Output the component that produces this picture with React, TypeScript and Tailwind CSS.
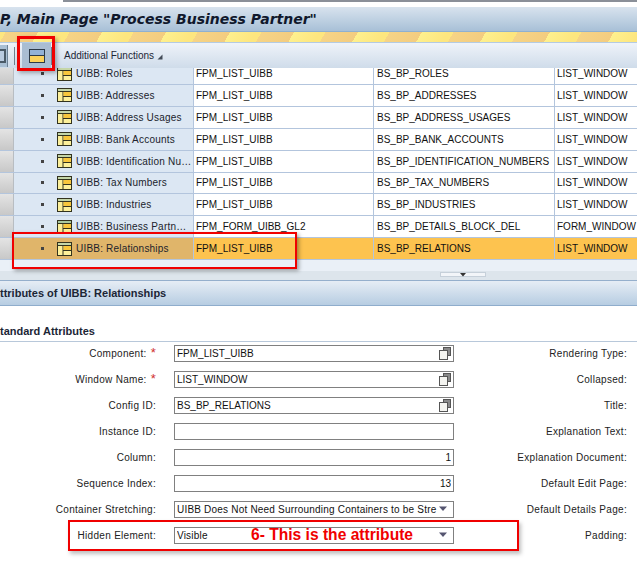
import React from 'react';

const rows = [
  { name: 'UIBB: Roles', comp: 'FPM_LIST_UIBB', config: 'BS_BP_ROLES', win: 'LIST_WINDOW' },
  { name: 'UIBB: Addresses', comp: 'FPM_LIST_UIBB', config: 'BS_BP_ADDRESSES', win: 'LIST_WINDOW' },
  { name: 'UIBB: Address Usages', comp: 'FPM_LIST_UIBB', config: 'BS_BP_ADDRESS_USAGES', win: 'LIST_WINDOW' },
  { name: 'UIBB: Bank Accounts', comp: 'FPM_LIST_UIBB', config: 'BS_BP_BANK_ACCOUNTS', win: 'LIST_WINDOW' },
  { name: 'UIBB: Identification Nu…', comp: 'FPM_LIST_UIBB', config: 'BS_BP_IDENTIFICATION_NUMBERS', win: 'LIST_WINDOW' },
  { name: 'UIBB: Tax Numbers', comp: 'FPM_LIST_UIBB', config: 'BS_BP_TAX_NUMBERS', win: 'LIST_WINDOW' },
  { name: 'UIBB: Industries', comp: 'FPM_LIST_UIBB', config: 'BS_BP_INDUSTRIES', win: 'LIST_WINDOW' },
  { name: 'UIBB: Business Partn…', comp: 'FPM_FORM_UIBB_GL2', config: 'BS_BP_DETAILS_BLOCK_DEL', win: 'FORM_WINDOW', form: true },
  { name: 'UIBB: Relationships', comp: 'FPM_LIST_UIBB', config: 'BS_BP_RELATIONS', win: 'LIST_WINDOW', selected: true },
];

const fields = [
  { label: 'Component:', required: true, value: 'FPM_LIST_UIBB', icon: 'copy', right: 'Rendering Type:' },
  { label: 'Window Name:', required: true, value: 'LIST_WINDOW', icon: 'copy', right: 'Collapsed:' },
  { label: 'Config ID:', value: 'BS_BP_RELATIONS', icon: 'copy', right: 'Title:' },
  { label: 'Instance ID:', value: '', right: 'Explanation Text:' },
  { label: 'Column:', value: '1', alignRight: true, right: 'Explanation Document:' },
  { label: 'Sequence Index:', value: '13', alignRight: true, right: 'Default Edit Page:' },
  { label: 'Container Stretching:', value: 'UIBB Does Not Need Surrounding Containers to be Stre', icon: 'select', right: 'Default Details Page:' },
  { label: 'Hidden Element:', value: 'Visible', icon: 'select', right: 'Padding:' },
];

const UibbIcon = ({ form }: { form?: boolean }) => (
  <svg width="15" height="14" viewBox="0 0 15 14" className="shrink-0">
    <rect x="0.5" y="0.5" width="14" height="13" fill="#fdf09a" stroke="#33331f" />
    <rect x="1" y="1" width="13" height="2.5" fill={form ? '#a9c9a0' : '#c5d6a8'} />
    <path d="M1 3.5H14M6 3.5V13.5M6 8.5H14" stroke="#33331f" fill="none" />
    <rect x="6.5" y="4" width="7.5" height="4" fill="#f8c63c" />
  </svg>
);

const CopyIcon = () => (
  <svg width="12" height="13" viewBox="0 0 12 13" className="shrink-0">
    <rect x="4.5" y="0.5" width="7" height="8" fill="#8a8a8a" stroke="#555" />
    <rect x="0.5" y="3.5" width="8" height="9" fill="#f4f4f0" stroke="#555" />
  </svg>
);

const Field = ({ f }: { f: (typeof fields)[number] }) => (
  <div className="flex h-[26px] items-center pb-[4px]">
    <div className="w-[156px] shrink-0 whitespace-nowrap text-right tracking-[0.3px] text-[#222]">
      {f.label}
      {f.required && <span className="ml-[4px] text-[13px] leading-none text-[#d03030]">*</span>}
    </div>
    <div className="w-[18px] shrink-0" />
    <div className="flex h-[17px] w-[280px] shrink-0 items-center overflow-hidden border border-[#808080] bg-white pl-[2px] pr-[2px]">
      <span className={`min-w-0 flex-1 overflow-hidden whitespace-nowrap text-[#111] ${f.alignRight ? 'text-right' : ''} ${f.icon === 'select' ? 'tracking-[0.2px]' : ''}`}>
        {f.value}
      </span>
      {f.icon === 'copy' && <CopyIcon />}
      {f.icon === 'select' && (
        <svg width="12" height="6" viewBox="0 0 12 6" className="ml-[1px] mr-[1px] shrink-0">
          <path d="M1 0.5H9L5 5Z" fill="#555570" />
        </svg>
      )}
    </div>
    <div className="w-[173px] shrink-0 whitespace-nowrap text-right tracking-[0.3px] text-[#222]">{f.right}</div>
  </div>
);

export default function App() {
  return (
    <div className="relative h-[565px] w-[637px] overflow-hidden bg-white font-['Liberation_Sans',Arial,sans-serif] text-[10px] text-[#111]">
      <div className="h-[7px] bg-white">
        <div className="ml-[63px] h-[2px] bg-[#8a8f98]" />
      </div>

      <div className="flex h-[25px] items-center border-b border-[#8fb0cf] bg-gradient-to-b from-[#d8e3ee] to-[#a8c0d7]">
        <h1 className="whitespace-nowrap font-['DejaVu_Sans',sans-serif] text-[14px] font-bold italic text-[#10182c]">
          P, Main Page "Process Business Partner"
        </h1>
      </div>

      <div className="h-[10px] bg-[repeating-linear-gradient(120deg,#fde67f_0px,#fde67f_5px,#f6d486_5px,#f3cc80_33px,#fef08e_33px,#fde67f_55.4px)]" />

      <div className="flex h-[26px] items-center border-t border-[#b4cbe2] bg-gradient-to-b from-[#eff3f9] to-[#cfdcea]">
        <div className="flex h-[22px] w-[8px] items-center overflow-hidden border-r border-[#6d8296] bg-[#a9bfd4]">
          <div className="-ml-[8px] h-[14px] w-[14px] shrink-0 border-2 border-[#4a5a68] bg-[#b9cbe0]" />
        </div>
        <div className="ml-[6px] h-[18px] w-px bg-[#6f7f8c]" />
        <div className="ml-[7px] flex h-[26px] w-[29px] items-center justify-center bg-[#a9bdd2]">
          <svg width="16" height="14" viewBox="0 0 16 14">
            <rect x="0.5" y="0.5" width="15" height="13" fill="#93b2d6" stroke="#2c3a48" />
            <rect x="1" y="7" width="14" height="6" fill="#fbd25c" />
            <path d="M1 6.5H15" stroke="#2c3a48" />
          </svg>
        </div>
        <div className="h-[18px] w-px bg-[#6f7f8c]" />
        <span className="ml-[12px] text-[#1c2636]">Additional Functions</span>
        <svg width="6" height="6" viewBox="0 0 6 6" className="ml-[3px] mt-[3px]">
          <path d="M5.5 0.5V5.5H0.5Z" fill="#444c58" />
        </svg>
      </div>

      <div className="h-[192px] overflow-hidden">
        <div className="-mt-[4.875px]">
          {rows.map((r) => (
            <div
              key={r.name}
              className={`flex h-[21.875px] items-center border-b border-[#b3c5dd] ${r.selected ? 'bg-[#fdc34f]' : 'bg-white'}`}
            >
              <div className="h-full w-[14px] shrink-0 border-r border-[#b8bdc2] bg-gradient-to-b from-[#e4e4e4] to-[#c8c8c8]" />
              <div
                className={`flex h-full w-[180px] shrink-0 items-center border-r border-[#b3c5dd] pl-[27px] ${r.selected ? 'bg-[#e0b56a]' : 'bg-[#dce7f3]'}`}
              >
                <span className="mr-[13px] h-[3px] w-[3px] shrink-0 bg-[#444]" />
                <UibbIcon form={r.form} />
                <span className="ml-[4px] whitespace-nowrap tracking-[0.2px] text-[#20232c]">{r.name}</span>
              </div>
              <div className="flex h-full w-[180px] shrink-0 items-center border-r border-[#b3c5dd] pl-[2px]">{r.comp}</div>
              <div className="flex h-full w-[181px] shrink-0 items-center border-r border-[#b3c5dd] pl-[3px]">{r.config}</div>
              <div className="whitespace-nowrap pl-[2px]">{r.win}</div>
            </div>
          ))}
        </div>
      </div>

      <div className="h-[11px] bg-[#eaf0f7]" />
      <div className="flex h-[10px] justify-center border-b border-[#95afcc] bg-[#dde5ec] pl-[288px]">
        <div className="mt-[1px] flex h-[5px] w-[46px] items-center justify-center border border-[#c6d0da] bg-[#f2f5f9]">
          <svg width="6" height="4" viewBox="0 0 6 4">
            <path d="M0 0H6L3 3.5Z" fill="#333" />
          </svg>
        </div>
      </div>

      <div className="flex h-[25px] items-center border-b border-[#8fadcc] bg-gradient-to-b from-[#e6edf5] to-[#b7cde2]">
        <h2 className="whitespace-nowrap text-[11px] font-bold text-[#1c2636]">ttributes of UIBB: Relationships</h2>
      </div>

      <h3 className="mt-[17px] h-[16px] whitespace-nowrap text-[11px] font-bold leading-[16px] text-[#1c2636]">tandard Attributes</h3>
      <div className="mt-[2px] h-px bg-[#b8c8da]" />

      <div>
        {fields.map((f) => (
          <Field key={f.label} f={f} />
        ))}
      </div>

      <div className="absolute left-[17px] top-[36px] h-[35px] w-[38px] border-[3px] border-[#f00000] shadow-[2px_2px_4px_rgba(0,0,0,0.3)]" />
      <div className="absolute left-[12px] top-[232px] h-[37px] w-[285px] border-[2px] border-[#f00000] shadow-[2px_2px_4px_rgba(0,0,0,0.35)]" />
      <div className="absolute left-[68px] top-[520px] h-[31px] w-[451px] border-[2px] border-[#f00000] shadow-[2px_3px_4px_rgba(0,0,0,0.25)]" />
      <span className="absolute left-[251px] top-[525px] text-[15.6px] font-bold leading-[20px] text-[#f00000]">6- This is the attribute</span>
    </div>
  );
}
